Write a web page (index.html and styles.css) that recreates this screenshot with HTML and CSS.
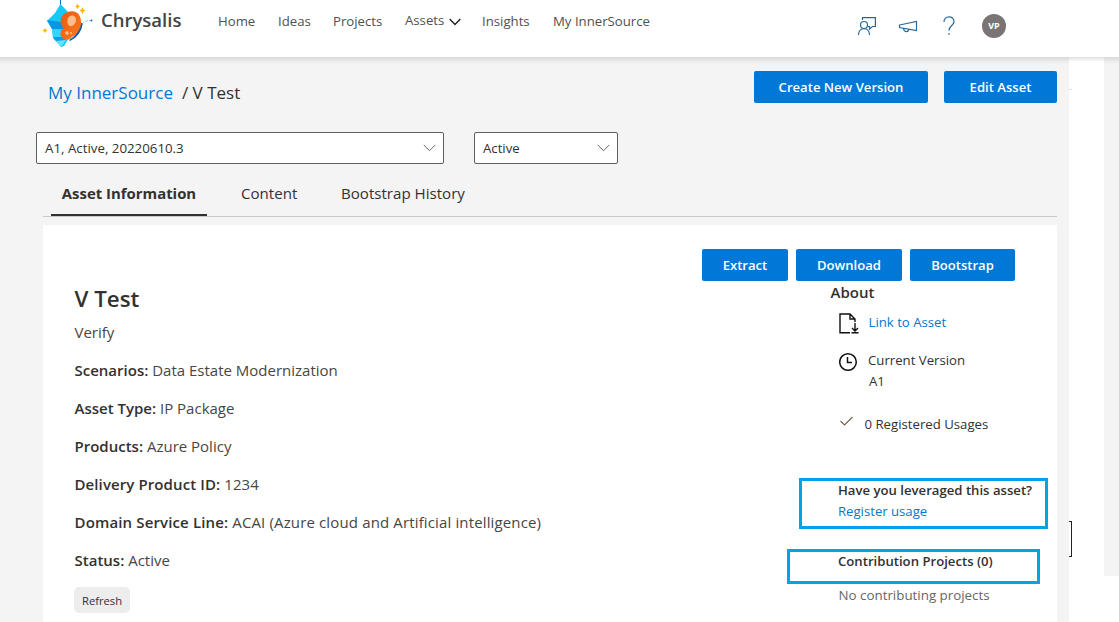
FILE: index.html
```html
<!DOCTYPE html>
<html lang="en">
<head>
<meta charset="utf-8">
<title>Chrysalis</title>
<link rel="stylesheet" href="styles.css">
</head>
<body>
<header class="topbar">
  <svg class="logo" width="52" height="50" viewBox="0 0 52 50">
    <defs>
      <linearGradient id="wing" x1="0" y1="0" x2="1" y2="1"><stop offset="0" stop-color="#e8590f"/><stop offset="1" stop-color="#ff7a1f"/></linearGradient>
    </defs>
    <path d="M19.500 0V6" stroke="#1267b4" stroke-width="1"/>
    <path d="M19.500 4L27 12L28 38L23 46L20 47L12 38L11 29L6 21L14 13Z" fill="#16c8fa"/>
    <path d="M6 20L26 23L25 29L11 29Z" fill="#0796e6"/>
    <path d="M11 29L25 30L22 38L12 37Z" fill="#32d5fb"/>
    <path d="M12 37L25 37L23 42L15 41Z" fill="#109ce8"/>
    <path d="M15 41L25 40L20 47Z" fill="#68e0fc"/>
    <path d="M28 40Q36 36 40 23L42 23Q40 36 29 41Z" fill="#155ba8"/>
    <path d="M27 12C35 9 41 15 40 24C39 30 35 35 31 37C27 42 19 39 19.500 33C19.500 31 21 29 23 28C17 24 19 14 27 12Z" fill="url(#wing)"/>
    <path d="M27 18C30 14 35 15 35 20C35 24 31 27 29 26C26 25 26 21 27 18Z" fill="#ffbd8c"/>
    <circle cx="26" cy="33" r="1.700" fill="#ffc39b"/><circle cx="30" cy="33" r="1" fill="#ffc39b"/>
    <path d="M41 24Q45 20 51 20.500" fill="none" stroke="#93b9dc" stroke-width=".9" stroke-dasharray="3 1"/><circle cx="50.500" cy="20.500" r=".9" fill="#155ba8"/>
    <path d="M36.500 3.500L37.400 5.500L39 6.500L37.400 7.300L36.500 9L35.600 7.300L34 6.500L35.600 5.500ZM41.500 7L42.500 9.500L44.500 10.500L42.500 11.500L41.500 14L40.500 11.500L38.500 10.500L40.500 9.500ZM4 28L4.800 29.500L6.500 30.500L4.800 31.500L4 33L3.200 31.500L1.500 30.500L3.200 29.500Z" fill="#ffad12"/>
  </svg>
  <span class="brand">Chrysalis</span>
  <nav class="nav">
    <a class="n-home">Home</a><a class="n-ideas">Ideas</a><a class="n-projects">Projects</a>
    <a class="n-assets">Assets<svg width="12" height="8" viewBox="0 0 12 8"><path d="M.7 1L6 6.500L11.300 1" fill="none" stroke="#222" stroke-width="1.400"/></svg></a>
    <a class="n-insights">Insights</a><a class="n-inner">My InnerSource</a>
  </nav>
  <div class="tools">
    <svg class="t-feedback" width="20" height="20" viewBox="0 0 20 20" fill="none" stroke="#2b6796" stroke-width="1.200"><path d="M6.500 4V1.600H19.400V10.500H16.500L13.500 13V10.500H12"/><circle cx="8" cy="9" r="3.500"/><path d="M2.500 19C2.500 10.500 13.500 10.500 13.500 19"/></svg>
    <svg class="t-horn" width="20" height="14" viewBox="0 0 20 14" fill="none" stroke="#2b6796" stroke-width="1.200"><path d="M1.500 5L18.500 1.500V10.500L1.500 7.500ZM5.500 8.500C6 12.500 10 12.500 11 9.500"/></svg>
    <svg class="t-help" width="12" height="20" viewBox="0 0 12 20" fill="none" stroke="#2b6796" stroke-width="1.200"><path d="M1 6C1 -.8 11 -.8 11 5.500C11 9.500 6 9.500 6 14.500M6 17V18.800"/></svg>
    <span class="avatar">VP</span>
  </div>
</header>
<div class="body">
  <main class="page">
    <div class="headline">
      <div class="crumbs"><a class="link">My InnerSource</a><span class="here">/ V Test</span></div>
      <button class="btn create">Create New Version</button>
      <button class="btn edit">Edit Asset</button>
    </div>
    <div class="filters">
      <div class="select version"><span>A1, Active, 20220610.3</span><svg width="13" height="8" viewBox="0 0 13 8"><path d="M.8 1L6.500 6.700L12.200 1" fill="none" stroke="#666" stroke-width="1"/></svg></div>
      <div class="select state"><span>Active</span><svg width="13" height="8" viewBox="0 0 13 8"><path d="M.8 1L6.500 6.700L12.200 1" fill="none" stroke="#666" stroke-width="1"/></svg></div>
    </div>
    <div class="tabs">
      <span class="tab active">Asset Information</span><span class="tab content">Content</span><span class="tab history">Bootstrap History</span>
    </div>
    <section class="card">
      <div class="actions"><button class="btn extract">Extract</button><button class="btn download">Download</button><button class="btn bootstrap">Bootstrap</button></div>
      <div class="columns">
        <div class="details">
          <h1>V Test</h1>
          <p class="verify">Verify</p>
          <p><b>Scenarios:</b> Data Estate Modernization</p>
          <p><b>Asset Type:</b> IP Package</p>
          <p><b>Products:</b> Azure Policy</p>
          <p class="delivery"><b>Delivery Product ID:</b> 1234</p>
          <p class="domain"><b>Domain Service Line:</b> ACAI (Azure cloud and Artificial intelligence)</p>
          <p><b>Status:</b> Active</p>
          <button class="refresh">Refresh</button>
        </div>
        <aside class="about">
          <h2>About</h2>
          <div class="item doc"><svg width="20" height="21" viewBox="0 0 20 21" fill="none" stroke="#111" stroke-width="1.400"><path d="M11 19.800H1V1H11L16 6V9M11 1V6H16M16 10V17.500M13 15L16 18L19 15M12.500 19.800H19.500"/></svg><a class="link">Link to Asset</a></div>
          <div class="item clock"><svg width="20" height="20" viewBox="0 0 20 20" fill="none" stroke="#111" stroke-width="1.500"><circle cx="9" cy="10" r="8.300"/><path d="M8.500 5V10.500H13"/></svg><div>Current Version<br><span class="ver">A1</span></div></div>
          <div class="item usages"><svg width="14" height="10" viewBox="0 0 14 10"><path d="M.5 5L4.500 9L12.500 1" fill="none" stroke="#73604f" stroke-width="1.100"/></svg><span>0 Registered Usages</span></div>
          <div class="mark leveraged"><b>Have you leveraged this asset?</b><a class="link">Register usage</a></div>
          <div class="mark contrib"><b>Contribution Projects (0)</b></div>
          <p class="none">No contributing projects</p>
        </aside>
      </div>
    </section>
  </main>
  <div class="gutter"><i class="tick"></i><i class="handle"></i></div>
  <div class="strip"></div>
</div>
</body>
</html>
```
FILE: styles.css
```css
* { box-sizing: border-box; }
body { margin: 0; width: 1119px; height: 622px; overflow: hidden; background: #fff; color: #323130; font: 13.200px/20px "Open Sans", "Noto Sans", sans-serif; display: flex; flex-direction: column; }
button { border: 0; padding: 0; font: inherit; }
svg { display: block; flex: none; }
h1, h2, p { margin: 0; }
b { font-weight: 600; }
.link { color: #0078d4; }
.topbar { height: 57px; flex: none; display: flex; background: #fff; }
.logo { margin-left: 41px; }
.brand { margin-left: 8px; width: 117px; font-size: 18.500px; font-weight: 600; line-height: 40px; color: #444; white-space: nowrap; }
.nav { display: flex; width: 638px; padding-top: 11px; font-size: 13.200px; color: #505050; white-space: nowrap; }
.nav a { flex: none; }
.n-home { width: 60px; }
.n-ideas { width: 55px; }
.n-projects { width: 72px; }
.n-assets { width: 77px; display: flex; gap: 5px; margin-top: -1px; }
.n-assets svg { margin-top: 8px; }
.n-insights { width: 71px; }
.tools { display: flex; align-items: flex-start; }
.t-feedback { margin-top: 16px; }
.t-horn { margin: 20px 0 0 22px; }
.t-help { margin: 16px 0 0 25px; }
.avatar { margin: 14px 0 0 27px; width: 24px; height: 24px; border-radius: 50%; background: #7a7574; color: #fff; font-size: 9px; font-weight: 700; line-height: 24px; text-align: center; }
.body { flex: 1; display: flex; min-height: 0; }
.page { width: 1069px; background: linear-gradient(#d9d9d9, #f4f4f4 7px); flex: none; }
.headline { height: 75px; display: flex; padding: 14px 12px 0 48px; }
.crumbs { flex: 1; display: flex; gap: 9px; font-size: 17px; line-height: 44px; }
.btn { height: 32px; background: #0078d7; color: #fff; border-radius: 2px; font-weight: 600; font-size: 13.100px; }
.create { width: 174px; margin-right: 16px; }
.edit { width: 113px; }
.filters { display: flex; gap: 30px; padding-left: 36px; }
.select { height: 32px; border: 1px solid #605e5c; border-radius: 2px; background: #fff; display: flex; align-items: center; justify-content: space-between; padding: 0 7px 0 8px; }
.version { width: 408px; font-size: 13.300px; }
.state { width: 144px; }
.tabs { height: 53px; margin: 0 12px 0 43px; padding-left: 8px; border-bottom: 1px solid #c8c8c8; display: flex; font-size: 15.100px; line-height: 59px; white-space: nowrap; }
.active { width: 156px; height: 52px; text-align: center; font-weight: 700; font-size: 14.900px; border-bottom: 2px solid #323130; }
.content { margin-left: 34px; width: 100px; }
.card { margin: 8px 12px 0 43px; height: 397px; background: #fff; padding-top: 24px; }
.actions { display: flex; justify-content: flex-end; gap: 8px; padding-right: 42px; }
.extract { width: 86px; }
.download { width: 106px; }
.bootstrap { width: 105px; }
.columns { display: flex; }
.details { width: 744px; padding-left: 31.500px; font-size: 15px; }
.details p { height: 38px; line-height: 38px; color: #484644; white-space: nowrap; }
.details b { color: #323130; }
.details .delivery { letter-spacing: .1px; }
.details .domain { letter-spacing: .14px; }
h1 { font-size: 22.300px; font-weight: 600; line-height: 36px; margin-bottom: -4px; }
.refresh { margin: 8px 0 0 -.5px; width: 56px; height: 26px; border-radius: 5px; background: #ededed; color: #323130; font-size: 11.200px; padding-top: 1px; }
.about { flex: 1; white-space: nowrap; }
h2 { padding-left: 43.500px; font-size: 15px; font-weight: 600; line-height: 22px; height: 24px; }
.item { display: flex; padding-left: 52px; }
.doc { height: 45px; gap: 9.500px; padding-top: 7px; }
.doc svg { margin-top: 1px; }
.clock { height: 60px; gap: 9px; line-height: 21px; }
.clock svg { margin-top: 2px; }
.ver { padding-left: 1px; }
.usages { height: 68px; gap: 10.500px; padding: 4px 0 0 53px; }
.usages svg { margin-top: 2px; }
.mark { border: 3px solid #00a2e8; }
.leveraged { margin-left: 12px; width: 249px; height: 51px; padding-left: 36px; line-height: 21px; display: flex; flex-direction: column; font-size: 13.150px; }
.leveraged b { height: 20px; line-height: 19px; }
.contrib { margin-top: 20px; width: 253px; height: 35px; padding-left: 48px; line-height: 19px; font-size: 13.150px; }
.none { padding-left: 51.500px; line-height: 22px; color: #666; font-size: 13.350px; }
.gutter { width: 35px; background: linear-gradient(#e0e0e0, #fff 5px); display: flex; flex-direction: column; align-items: flex-start; }
.tick { margin-top: 32px; width: 3px; height: 1px; background: #ddd; }
.handle { margin-top: 431px; width: 3px; height: 36px; border: 1px solid #222; border-left: 0; }
.strip { width: 15px; height: 519px; background: linear-gradient(#d9d9d9, #f4f4f4 7px); }
```
